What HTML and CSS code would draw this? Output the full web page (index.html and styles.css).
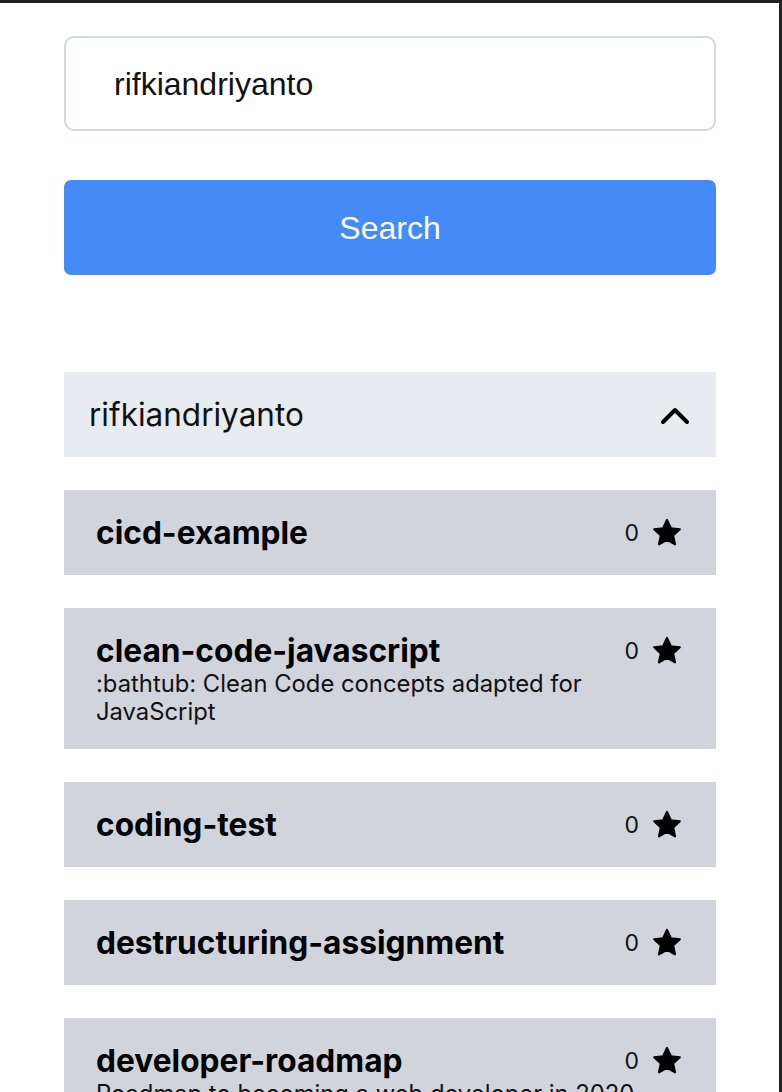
FILE: index.html
```html
<!DOCTYPE html>
<html lang="en">
<head>
<meta charset="utf-8">
<title>GitHub repositories</title>
<link rel="stylesheet" href="styles.css">
</head>
<body>
<div class="frame">
  <main class="container">
    <input class="search-input" type="text" value="rifkiandriyanto">
    <button class="search-btn" type="button">Search</button>

    <section class="user">
      <div class="user-head">
        <span class="user-name">rifkiandriyanto</span>
        <svg class="chevron" width="30" height="20" viewBox="0 0 30 20"><polyline points="3,17 15,5 27,17" fill="none" stroke="#000" stroke-width="4" stroke-linecap="round" stroke-linejoin="round"/></svg>
      </div>

      <div class="repos">
        <article class="repo">
          <div class="repo-row">
            <h3 class="repo-title">cicd-example</h3>
            <div class="repo-stars"><span>0</span><svg class="star" viewBox="0 0 24 24"><polygon points="12,2.2 14.9,8.4 21.6,9.2 16.6,13.8 18,20.5 12,17.1 6,20.5 7.4,13.8 2.4,9.2 9.1,8.4" fill="#000" stroke="#000" stroke-width="1.6" stroke-linejoin="round"/></svg></div>
          </div>
        </article>
        <article class="repo">
          <div class="repo-row">
            <h3 class="repo-title">clean-code-javascript</h3>
            <div class="repo-stars"><span>0</span><svg class="star" viewBox="0 0 24 24"><polygon points="12,2.2 14.9,8.4 21.6,9.2 16.6,13.8 18,20.5 12,17.1 6,20.5 7.4,13.8 2.4,9.2 9.1,8.4" fill="#000" stroke="#000" stroke-width="1.6" stroke-linejoin="round"/></svg></div>
          </div>
          <p class="repo-desc">:bathtub: Clean Code concepts adapted for JavaScript</p>
        </article>
        <article class="repo">
          <div class="repo-row">
            <h3 class="repo-title">coding-test</h3>
            <div class="repo-stars"><span>0</span><svg class="star" viewBox="0 0 24 24"><polygon points="12,2.2 14.9,8.4 21.6,9.2 16.6,13.8 18,20.5 12,17.1 6,20.5 7.4,13.8 2.4,9.2 9.1,8.4" fill="#000" stroke="#000" stroke-width="1.6" stroke-linejoin="round"/></svg></div>
          </div>
        </article>
        <article class="repo">
          <div class="repo-row">
            <h3 class="repo-title">destructuring-assignment</h3>
            <div class="repo-stars"><span>0</span><svg class="star" viewBox="0 0 24 24"><polygon points="12,2.2 14.9,8.4 21.6,9.2 16.6,13.8 18,20.5 12,17.1 6,20.5 7.4,13.8 2.4,9.2 9.1,8.4" fill="#000" stroke="#000" stroke-width="1.6" stroke-linejoin="round"/></svg></div>
          </div>
        </article>
        <article class="repo">
          <div class="repo-row">
            <h3 class="repo-title">developer-roadmap</h3>
            <div class="repo-stars"><span>0</span><svg class="star" viewBox="0 0 24 24"><polygon points="12,2.2 14.9,8.4 21.6,9.2 16.6,13.8 18,20.5 12,17.1 6,20.5 7.4,13.8 2.4,9.2 9.1,8.4" fill="#000" stroke="#000" stroke-width="1.6" stroke-linejoin="round"/></svg></div>
          </div>
          <p class="repo-desc">Roadmap to becoming a web developer in 2020</p>
        </article>
      </div>
    </section>
  </main>
</div>
</body>
</html>
```

FILE: styles.css
```css
* { box-sizing: border-box; }

html, body {
  margin: 0;
  padding: 0;
  background: #fff;
}

body {
  font-family: Inter, "Noto Sans", sans-serif;
  color: #000;
  overflow: hidden;
  height: 100vh;
}

.frame {
  height: 100vh;
  overflow: hidden;
  border-top: 3px solid #222;
  border-right: 3px solid #222;
  background: #fff;
}

.container {
  width: 652px;
  margin-left: 64px;
  padding-top: 33px;
  display: flex;
  flex-direction: column;
}

.search-input {
  display: block;
  width: 100%;
  height: 95px;
  border: 2px solid #d5d8de;
  border-radius: 10px;
  padding: 2px 0 0 48px;
  font-family: "Liberation Sans", Arial, sans-serif;
  font-size: 32px;
  color: #111;
  background: #fff;
  outline: none;
}

.search-btn {
  display: block;
  width: 100%;
  height: 95px;
  margin-top: 49px;
  border: none;
  border-radius: 7px;
  background: #458bf8;
  color: #fff;
  font-family: "Liberation Sans", Arial, sans-serif;
  font-size: 32px;
  padding-top: 2px;
  cursor: pointer;
}

.user {
  margin-top: 97px;
}

.user-head {
  height: 85px;
  background: #e8ebf0;
  display: flex;
  align-items: center;
  justify-content: space-between;
  padding: 0 26px 0 25px;
}

.user-name {
  font-size: 31.5px;
  color: #111;
}

.chevron {
  display: block;
}

.repos {
  display: flex;
  flex-direction: column;
  gap: 33px;
  margin-top: 33px;
}

.repo {
  background: #d1d5db;
  padding: 24px 33px 23px 32px;
}

.repo-row {
  display: flex;
  align-items: flex-start;
  justify-content: space-between;
}

.repo-title {
  margin: 0;
  font-size: 31.7px;
  font-weight: 700;
  line-height: 38px;
  color: #000;
}

.repo-desc {
  margin: 0;
  font-size: 23.8px;
  line-height: 28px;
  color: #111;
}

.repo-stars {
  display: flex;
  align-items: center;
  gap: 12px;
  height: 38px;
  font-size: 23px;
  color: #111;
  margin-left: 16px;
}

.star {
  width: 32px;
  height: 32px;
  display: block;
}
```
